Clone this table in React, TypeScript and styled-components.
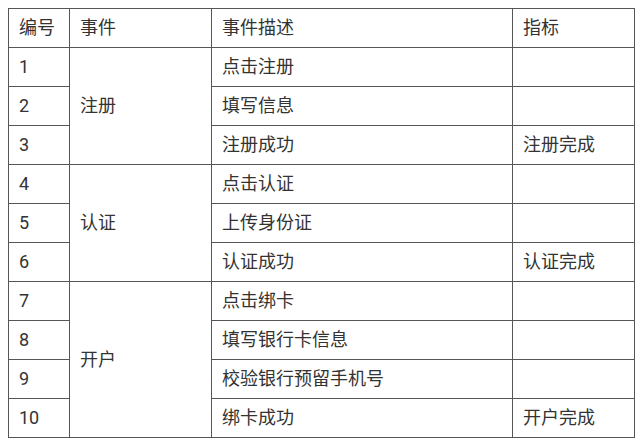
import React from 'react'
import styled, { createGlobalStyle } from 'styled-components'

const GlobalStyle = createGlobalStyle`
  html, body {
    margin: 0;
    padding: 0;
    background: #fff;
  }
  body {
    font-family: Roboto, "Noto Sans CJK SC", sans-serif;
    color: #333;
  }
`

type Group = {
  event: string
  steps: { id: number; desc: string; metric?: string }[]
}

const groups: Group[] = [
  {
    event: '注册',
    steps: [
      { id: 1, desc: '点击注册' },
      { id: 2, desc: '填写信息' },
      { id: 3, desc: '注册成功', metric: '注册完成' }
    ]
  },
  {
    event: '认证',
    steps: [
      { id: 4, desc: '点击认证' },
      { id: 5, desc: '上传身份证' },
      { id: 6, desc: '认证成功', metric: '认证完成' }
    ]
  },
  {
    event: '开户',
    steps: [
      { id: 7, desc: '点击绑卡' },
      { id: 8, desc: '填写银行卡信息' },
      { id: 9, desc: '校验银行预留手机号' },
      { id: 10, desc: '绑卡成功', metric: '开户完成' }
    ]
  }
]

const App: React.FC = () => {
  return (
    <Page>
      <GlobalStyle />
      <Table>
        <colgroup>
          <col style={{ width: 61 }} />
          <col style={{ width: 142 }} />
          <col style={{ width: 301 }} />
          <col style={{ width: 122 }} />
        </colgroup>
        <thead>
          <Row>
            <Head>编号</Head>
            <Head>事件</Head>
            <Head>事件描述</Head>
            <Head>指标</Head>
          </Row>
        </thead>
        <tbody>
          {groups.map(group =>
            group.steps.map((step, i) => (
              <Row key={step.id}>
                <Cell>{step.id}</Cell>
                {i === 0 && (
                  <Cell rowSpan={group.steps.length}>{group.event}</Cell>
                )}
                <Cell>{step.desc}</Cell>
                <Cell>{step.metric ?? ''}</Cell>
              </Row>
            ))
          )}
        </tbody>
      </Table>
    </Page>
  )
}

const Page = styled.div`
  padding: 8px 0 0 8px;
`

const Table = styled.table`
  border-collapse: collapse;
  table-layout: fixed;
  width: 627px;
  font-size: 18px;
`

const Row = styled.tr`
  height: 39px;
`

const Cell = styled.td`
  border: 1px solid #555;
  padding: 0 10px;
  vertical-align: middle;
  text-align: left;
  font-weight: 400;
  line-height: 24px;
  color: #333;
  white-space: nowrap;
`

const Head = styled(Cell).attrs({ as: 'th' })``

export default App
